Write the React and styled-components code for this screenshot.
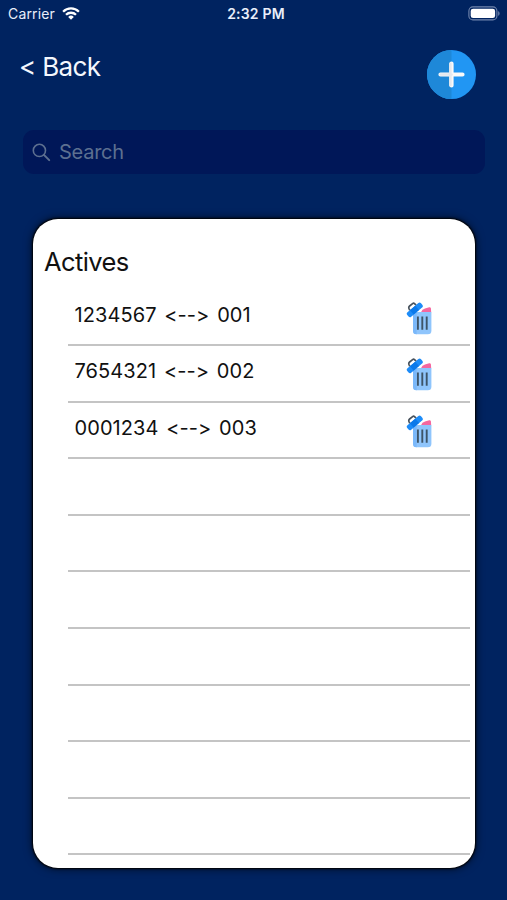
import styled, { createGlobalStyle } from 'styled-components';

const GlobalStyle = createGlobalStyle`
  * { box-sizing: border-box; }

  body {
    margin: 0;
    background: #002360;
    font-family: Inter, "Liberation Sans", sans-serif;
    /* keeps "-->" as plain characters */
    font-feature-settings: "calt" 0, "liga" 0;
  }
`;

const Screen = styled.main`
  width: 507px;
  height: 900px;
  overflow: hidden;
  display: flex;
  flex-direction: column;
  background: #002360;
`;

const StatusBar = styled.div`
  display: grid;
  grid-template-columns: 1fr auto 1fr;
  align-items: center;
  height: 26px;
  padding: 0 6px 0 8px;
  color: #e9eefa;
  font-size: 14px;
`;

const Carrier = styled.div`
  display: flex;
  align-items: center;
  gap: 7px;
  letter-spacing: 0.15px;
`;

const Time = styled.div`
  padding-left: 3px;
  font-weight: 600;
  letter-spacing: 0.2px;
`;

const BatterySlot = styled.div`
  display: flex;
  justify-content: flex-end;
`;

const Header = styled.header`
  display: flex;
  justify-content: space-between;
  align-items: flex-start;
  height: 104px;
  padding: 24px 31px 0 19px;
`;

const BackButton = styled.button`
  border: 0;
  padding: 0;
  background: none;
  color: #f4f7fd;
  font: inherit;
  font-size: 26px;
  line-height: 34px;
  letter-spacing: -0.65px;
`;

const AddButton = styled.button`
  border: 0;
  padding: 0;
  background: none;
  line-height: 0;
`;

const SearchField = styled.label`
  display: flex;
  align-items: center;
  gap: 8px;
  flex: none;
  height: 44px;
  margin: 0 22px 0 23px;
  padding: 0 9px;
  border-radius: 11px;
  background: #001758;
  color: #5d7090;
  font-size: 20px;
  letter-spacing: -0.25px;
`;

const Card = styled.section`
  flex: none;
  width: 442px;
  height: 649px;
  margin: 44.5px 0 0 33px;
  padding-top: 25px;
  overflow: hidden;
  border-radius: 25px;
  background: #fff;
  box-shadow: 0 0 2px 1px #000, 0 0 9px 1px rgba(0, 0, 0, 0.6);
  color: #111;
`;

const Title = styled.h1`
  margin: 0 0 0 11px;
  font-size: 25.5px;
  font-weight: 400;
  line-height: 36px;
  letter-spacing: -0.6px;
`;

const List = styled.ul`
  list-style: none;
  margin: 10px 5px 0 35px;
  padding: 0;
`;

const Row = styled.li`
  display: flex;
  justify-content: space-between;
  align-items: flex-start;
  height: 56.6px;
  padding: 12px 37px 0 6.5px;
  border-bottom: 2px solid #c4c4c4;
`;

const Pair = styled.span`
  font-size: 20px;
  line-height: 26px;
  word-spacing: 2px;
  letter-spacing: 0.08px;
`;

const DeleteButton = styled.button`
  border: 0;
  padding: 0;
  background: none;
  line-height: 0;
`;

const WifiIcon = () => (
  <svg width="18" height="13" viewBox="0 0 18 13" fill="none" stroke="#fff" strokeWidth="2.3">
    <path d="M1.1 4.7a11.2 11.2 0 0 1 15.8 0" />
    <path d="M4 7.8a7.1 7.1 0 0 1 10 0" />
    <path d="M9 12.7 6.2 9.9a4 4 0 0 1 5.6 0z" fill="#fff" stroke="none" />
  </svg>
);

const BatteryIcon = () => (
  <svg width="33" height="15" viewBox="0 0 33 15">
    <rect x="0.9" y="0.9" width="28" height="13" rx="4" fill="none" stroke="#7186ad" strokeWidth="1.1" />
    <rect x="2.7" y="2.7" width="24.4" height="9.4" rx="2.4" fill="#fff" />
    <path d="M30.2 5.2c1.8.5 1.8 4.1 0 4.6z" fill="#7186ad" />
  </svg>
);

const PlusIcon = () => (
  <svg width="49" height="49" viewBox="0 0 49 49">
    <circle cx="24.5" cy="24.5" r="24.5" fill="#2196f3" />
    <path d="M24.5 0a24.5 24.5 0 0 0 0 49z" fill="#1e88d8" />
    <path d="M24.5 13.5v22M13.5 24.5h22" stroke="#fafafa" strokeWidth="4.2" strokeLinecap="round" />
    <path d="M13.5 24.5h11M23.4 13.8v21.4" stroke="#e4e8ee" strokeWidth="2.6" strokeLinecap="round" />
  </svg>
);

const SearchIcon = () => (
  <svg width="19" height="19" viewBox="0 0 19 19" fill="none" stroke="currentColor" strokeWidth="1.6" strokeLinecap="round">
    <circle cx="7.4" cy="7.4" r="6.1" />
    <path d="M11.9 11.9l5.3 5.2" strokeWidth="2" />
  </svg>
);

const TrashIcon = () => (
  <svg width="27" height="34" viewBox="0 1 27 34">
    <path d="M15 11.2q1-3 4-3.6l4.2-1.4q1.4-.3 1.7 1l.3 4z" fill="#f5679f" />
    <path d="M7 11h18.4v18.7a3.6 3.6 0 0 1-3.6 3.6H10.6A3.6 3.6 0 0 1 7 29.7z" fill="#8fc5fc" />
    <path d="M7 11h3.6v22.3A3.6 3.6 0 0 1 7 29.7z" fill="#7ab8fa" />
    <path d="M11.9 15.4v13.4M16.3 15.4v13.4M20.7 15.4v13.4" stroke="#3d5468" strokeWidth="1.9" />
    <path d="M3.8 9.4 2.9 7.2q-.4-1.3.7-2.2l3-2.4q1-.8 1.9 0l1.6 1.6" fill="none" stroke="#47525d" strokeWidth="1.7" />
    <g transform="rotate(-40 8.4 9.2)">
      <rect x="-0.1" y="6.3" width="18" height="5.8" rx="1.9" fill="#1d8cf8" />
      <rect x="5" y="6.3" width="7" height="5.8" fill="#0b79ea" />
    </g>
  </svg>
);

const actives = [
  { id: '1234567', code: '001' },
  { id: '7654321', code: '002' },
  { id: '0001234', code: '003' },
];

const rows = Array.from({ length: 10 }, (_, i) => actives[i]);

export default function App() {
  return (
    <>
      <GlobalStyle />
      <Screen>
        <StatusBar>
          <Carrier>
            Carrier
            <WifiIcon />
          </Carrier>
          <Time>2:32 PM</Time>
          <BatterySlot>
            <BatteryIcon />
          </BatterySlot>
        </StatusBar>

        <Header>
          <BackButton>&lt; Back</BackButton>
          <AddButton aria-label="Add">
            <PlusIcon />
          </AddButton>
        </Header>

        <SearchField>
          <SearchIcon />
          Search
        </SearchField>

        <Card>
          <Title>Actives</Title>
          <List>
            {rows.map((item, i) => (
              <Row key={i}>
                {item && (
                  <>
                    <Pair>{`${item.id} <--> ${item.code}`}</Pair>
                    <DeleteButton aria-label="Delete">
                      <TrashIcon />
                    </DeleteButton>
                  </>
                )}
              </Row>
            ))}
          </List>
        </Card>
      </Screen>
    </>
  );
}
